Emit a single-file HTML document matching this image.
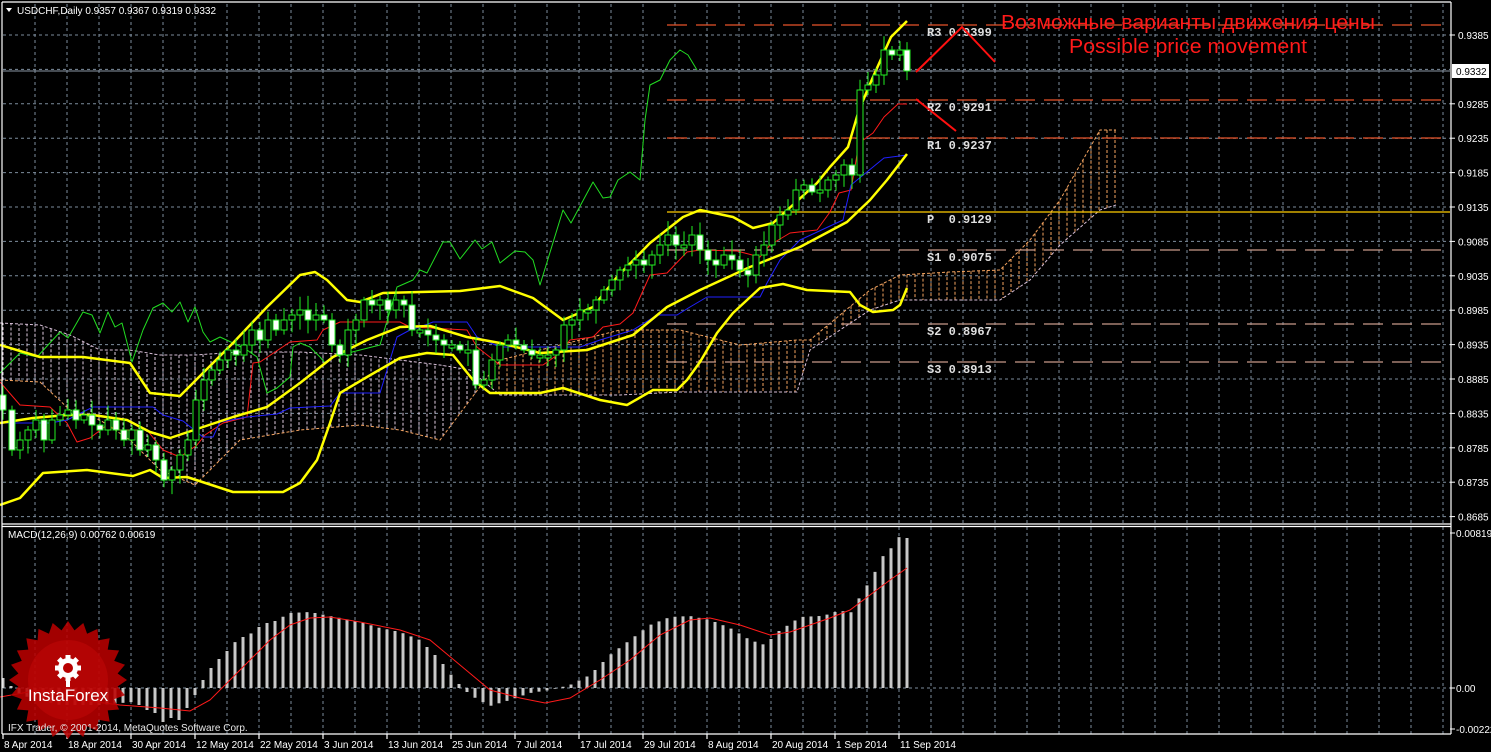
<!DOCTYPE html>
<html><head><meta charset="utf-8"><style>
html,body{margin:0;padding:0;background:#000;}
svg{display:block;}
text{font-family:"Liberation Sans","DejaVu Sans",sans-serif;}
</style></head><body>
<svg id="s" width="1491" height="752" viewBox="0 0 1491 752" xmlns="http://www.w3.org/2000/svg">
<rect width="1491" height="752" fill="#000"/>
<g id="grid"></g>
<g id="cloud"></g>
<g id="pivots"></g>
<g id="ind"></g>
<g id="candles"></g>
<g id="macd"></g>
<g id="frame"></g>
<g id="logo" transform="translate(68,680)">
  <polygon id="star" fill="#b80000" fill-opacity="0.88"/>
  <circle r="40" fill="#c40808" fill-opacity="0.5"/>
  <g fill="#fff" id="gear">
    <circle cx="0" cy="-12" r="10"/>
    <circle cx="0" cy="-12" r="5" fill="#b80000"/>
    <rect x="-2" y="-7" width="4" height="14"/>
  </g>
  <text x="0" y="21" text-anchor="middle" fill="#fff" font-size="17">InstaForex</text>
</g>
<text x="8" y="731" fill="#e8e8e8" font-size="10">IFX Trader, © 2001-2014, MetaQuotes Software Corp.</text>
<polygon points="6,8 12,8 9,12" fill="#fff"/>
<text x="17" y="14" fill="#fff" font-size="10">USDCHF,Daily  0.9357 0.9367 0.9319 0.9332</text>
<text x="8" y="538" fill="#fff" font-size="10">MACD(12,26,9) 0.00762 0.00619</text>
<text x="1188" y="29" text-anchor="middle" fill="#ff1a1a" font-size="20" textLength="374" lengthAdjust="spacingAndGlyphs">Возможные варианты движения цены</text>
<text x="1188" y="53" text-anchor="middle" fill="#ff1a1a" font-size="20" textLength="238" lengthAdjust="spacingAndGlyphs">Possible price movement</text>
<polyline points="916,72 962,27 995,62" fill="none" stroke="#ff1010" stroke-width="2"/>
<polyline points="916,99 956,131" fill="none" stroke="#ff1010" stroke-width="2"/>
</svg>
<script>
var NS="http://www.w3.org/2000/svg";
function el(p,t,a,txt){var e=document.createElementNS(NS,t);for(var k in a)e.setAttribute(k,a[k]);if(txt!==undefined)e.textContent=txt;document.getElementById(p).appendChild(e);return e;}
function interp(pts,x){if(x<=pts[0][0])return pts[0][1];for(var i=1;i<pts.length;i++){if(x<=pts[i][0]){var a=pts[i-1],b=pts[i];return a[1]+(b[1]-a[1])*(x-a[0])/(b[0]-a[0]);}}return pts[pts.length-1][1];}
var G="#7d8d9d";
for(var x=35;x<1450;x+=32){el("grid","line",{x1:x,y1:4,x2:x,y2:523,stroke:G,"stroke-dasharray":"3,3"});el("grid","line",{x1:x,y1:527,x2:x,y2:734,stroke:G,"stroke-dasharray":"3,3"});}
var labs=["0.9385","","0.9285","0.9235","0.9185","0.9135","0.9085","0.9035","0.8985","0.8935","0.8885","0.8835","0.8785","0.8735","0.8685"];
for(var i=0;i<15;i++){var y=35+i*34.4;el("grid","line",{x1:3,y1:y,x2:1450,y2:y,stroke:G,"stroke-dasharray":"3,3"});
 if(labs[i]){el("frame","line",{x1:1450,y1:y,x2:1455,y2:y,stroke:"#fff"});el("frame","text",{x:1458,y:y+4,fill:"#fff","font-size":"10"},labs[i]);}}
el("grid","line",{x1:3,y1:688,x2:1450,y2:688,stroke:G,"stroke-dasharray":"3,3"});
el("grid","line",{x1:3,y1:71,x2:1450,y2:71,stroke:"#8a96a4"});
var C=[[0,380,323],[40,382,325],[70,410,335],[100,420,350],[130,440,350],[160,470,355],[195,485,355],[240,440,352],[300,430,352],[360,425,355],[400,430,360],[440,440,365],[470,400,370],[500,360,395],[560,345,395],[620,330,395],[680,330,392],[740,345,392],[797,340,392],[810,340,350],[840,315,330],[870,290,310],[900,275,300],[950,272,300],[1000,270,300],[1030,240,280],[1060,200,245],[1100,130,210],[1116,130,205]];
var A=C.map(function(c){return [c[0],c[1]]}),B=C.map(function(c){return [c[0],c[2]]});
for(var x=3;x<=1116;x+=8){var a=interp(A,x),b=interp(B,x);el("cloud","line",{x1:x,y1:a,x2:x,y2:b,stroke:a<b?"#f4a460":"#e0cce0","stroke-dasharray":"3,2"});}
el("cloud","polyline",{points:A.map(function(p){return p.join(",")}).join(" "),fill:"none",stroke:"#f4a460","stroke-dasharray":"3,2"});
el("cloud","polyline",{points:B.map(function(p){return p.join(",")}).join(" "),fill:"none",stroke:"#d8bfd8","stroke-dasharray":"3,2"});
var LS="font-family:'Liberation Mono','DejaVu Sans Mono',monospace;font-weight:bold;font-size:12px;white-space:pre";
function piv(y,c,l){el("pivots","line",{x1:667,y1:y,x2:1450,y2:y,stroke:c,"stroke-width":1.3,"stroke-dasharray":"20,9"});if(l)el("pivots","text",{x:927,y:y+11,fill:"#e0e0e0",style:LS},l);}
piv(25,"#e8542a","R3 0.9399");piv(100,"#e8542a","R2 0.9291");piv(138,"#e8542a","R1 0.9237");
el("pivots","line",{x1:667,y1:212,x2:1450,y2:212,stroke:"#ffcc00","stroke-width":1.2});
el("pivots","text",{x:927,y:223,fill:"#e0e0e0",style:LS},"P  0.9129");
piv(250,"#c89a8a","S1 0.9075");piv(324,"#c89a8a","S2 0.8967");piv(362,"#c89a8a","S3 0.8913");
function pl(pts,c,w){el("ind","polyline",{points:pts.map(function(p){return p.join(",")}).join(" "),fill:"none",stroke:c,"stroke-width":w,"stroke-linejoin":"round"});}
pl([[0,373],[20,353],[37,357],[60,332],[68,338],[83,312],[92,315],[100,333],[108,312],[115,327],[122,323],[132,362],[143,330],[153,308],[163,303],[172,312],[180,302],[188,322],[195,307],[203,332],[210,342],[220,337],[233,343],[247,350],[257,357],[267,393],[277,388],[290,377],[293,347],[300,343],[310,347],[320,357],[325,363],[333,357],[360,350],[380,345],[397,287],[413,280],[420,270],[427,273],[443,242],[450,242],[460,259],[475,240],[482,249],[492,242],[500,263],[515,251],[525,252],[533,260],[540,285],[563,210],[571,223],[593,182],[603,198],[610,197],[618,180],[630,172],[640,180],[645,120],[650,85],[660,80],[670,60],[680,50],[688,55],[697,70]],"#22dd22",1);
pl([[0,382],[20,405],[50,407],[67,423],[77,442],[90,438],[107,425],[117,430],[147,430],[163,450],[180,457],[197,445],[205,435],[223,423],[247,417],[253,363],[260,362],[290,342],[317,340],[323,330],[340,322],[400,322],[410,327],[467,330],[477,347],[500,365],[543,365],[560,353],[570,340],[593,337],[603,327],[620,324],[633,313],[650,275],[667,273],[687,252],[700,250],[737,251],[760,257],[770,245],[790,233],[817,230],[830,212],[839,193],[851,190],[859,143],[873,133],[884,117],[898,104],[907,104]],"#ff1a1a",1);
pl([[0,423],[50,423],[67,420],[93,407],[153,407],[163,415],[183,421],[203,437],[213,437],[220,422],[247,417],[277,414],[290,408],[330,406],[340,393],[380,393],[397,337],[410,330],[420,327],[433,322],[467,322],[477,337],[500,347],[580,347],[600,340],[633,330],[657,315],[677,315],[690,307],[707,297],[760,297],[767,283],[780,260],[800,240],[843,220],[851,185],[884,158],[907,155]],"#2020ff",1);
pl([[0,345],[40,357],[83,357],[130,363],[150,393],[180,396],[193,383],[233,343],[267,307],[300,275],[315,272],[327,280],[347,300],[360,302],[383,293],[420,292],[460,291],[500,286],[533,298],[563,320],[593,307],[617,277],[650,243],[683,217],[700,210],[733,217],[753,228],[773,223],[817,183],[830,167],[848,147],[859,110],[873,77],[891,37],[907,21]],"#ffff00",2.5);
pl([[0,423],[33,418],[67,415],[93,415],[127,420],[150,432],[170,438],[200,428],[233,417],[267,407],[300,383],[333,357],[367,340],[400,327],[430,326],[467,337],[500,343],[540,353],[587,350],[633,335],[667,307],[700,290],[750,267],[800,247],[847,222],[870,200],[887,180],[907,154]],"#ffff00",2.5);
pl([[0,505],[20,498],[43,473],[87,470],[133,476],[150,470],[163,478],[187,477],[233,492],[283,492],[300,483],[317,460],[330,423],[340,393],[367,377],[400,358],[427,353],[453,355],[473,380],[490,393],[540,393],[563,388],[600,400],[627,405],[653,390],[677,390],[687,380],[700,362],[717,333],[733,313],[760,288],[783,284],[807,290],[850,292],[860,305],[873,312],[893,310],[900,305],[907,288]],"#ffff00",2.5);
var P=[[3,410],[12,450],[20,440],[28,430],[36,420],[44,440],[52,420],[60,415],[68,410],[76,420],[84,415],[92,425],[100,430],[108,420],[116,430],[124,440],[132,430],[140,450],[148,445],[156,460],[164,480],[172,470],[180,455],[188,440],[196,400],[204,380],[212,370],[220,360],[228,350],[236,355],[244,345],[252,330],[260,340],[268,320],[276,330],[284,320],[292,315],[300,310],[308,320],[316,315],[324,320],[332,345],[340,355],[348,330],[356,320],[364,300],[372,305],[380,300],[388,310],[396,300],[404,305],[412,330],[420,330],[428,335],[436,340],[444,345],[452,345],[460,350],[468,350],[476,385],[484,380],[492,360],[500,345],[508,340],[516,345],[524,350],[532,355],[540,355],[548,355],[556,350],[564,325],[572,320],[580,310],[588,310],[596,300],[604,290],[612,280],[620,270],[628,265],[636,260],[644,265],[652,255],[660,245],[668,235],[676,245],[684,245],[692,235],[700,250],[708,260],[716,265],[724,255],[732,260],[740,270],[748,275],[756,255],[764,245],[772,225],[780,215],[788,210],[796,190],[804,185],[812,192],[820,190],[828,180],[836,175],[844,165],[852,175],[860,90],[868,85],[876,75],[884,50],[892,55],[900,50],[907,71]];
var seed=7;function rnd(){seed=(seed*9301+49297)%233280;return seed/233280;}
var prev=400;
for(var i=0;i<P.length;i++){var x=P[i][0],c=P[i][1],o=(i==0?395:prev);if(Math.abs(o-c)<3)o=c+3;var hi=Math.min(o,c)-3-rnd()*12,lo=Math.max(o,c)+3+rnd()*12;
 el("candles","line",{x1:x,y1:hi,x2:x,y2:lo,stroke:"#22ee22"});
 el("candles","rect",{x:x-3,y:Math.min(o,c),width:6,height:Math.abs(o-c),fill:c<o?"#000":"#fff",stroke:"#22ee22"});prev=c;}
var H=[[3,678],[20,695],[40,700],[60,705],[100,705],[132,702],[139,705],[147,710],[155,713],[163,722],[171,718],[179,720],[187,708],[195,695],[203,680],[211,668],[219,659],[228,650],[236,641],[243,637],[252,633],[259,627],[267,623],[275,621],[290,613],[310,612],[320,614],[340,618],[360,622],[380,628],[400,632],[420,640],[440,660],[455,680],[470,695],[490,706],[510,700],[530,693],[550,690],[570,685],[590,675],[610,655],[630,640],[650,625],[670,617],[690,616],[710,620],[730,628],[750,640],[765,645],[780,630],[790,624],[800,617],[820,616],[830,614],[840,610],[850,614],[858,600],[866,587],[874,574],[882,557],[890,550],[894,543],[900,536],[907,538]];
for(var x=3;x<=907;x+=8){var y=interp(H,x);el("macd","rect",{x:x-1.5,y:Math.min(y,688),width:3,height:Math.abs(688-y),fill:"#c8c8c8"});}
var S=[[0,697],[40,690],[80,700],[120,705],[160,708],[190,711],[210,700],[230,680],[250,660],[270,640],[290,625],[310,618],[330,617],[360,622],[400,630],[430,640],[460,665],[490,690],[520,698],[545,703],[570,698],[600,680],[630,660],[660,635],[690,620],[710,618],[740,625],[770,635],[790,632],[810,625],[830,618],[850,610],[870,595],[890,580],[907,568]];
el("macd","polyline",{points:S.map(function(p){return p.join(",")}).join(" "),fill:"none",stroke:"#ff1a1a","stroke-width":1});
function fl(a,b,c,d){el("frame","line",{x1:a,y1:b,x2:c,y2:d,stroke:"#fff","stroke-width":1.2});}
fl(2,2,1451,2);fl(2,2,2,734);fl(1451,2,1451,734);fl(2,524,1451,524);fl(2,526.5,1451,526.5);fl(2,734,1451,734);
el("frame","rect",{x:1452,y:64,width:37,height:14,fill:"#fff"});
el("frame","text",{x:1456,y:75,fill:"#000","font-size":"10"},"0.9332");
[["0.00819",533],["0.00",688],["-0.00222",729]].forEach(function(l){el("frame","line",{x1:1450,y1:l[1],x2:1455,y2:l[1],stroke:"#fff"});el("frame","text",{x:1456,y:l[1]+4,fill:"#fff","font-size":"10"},l[0]);});
var D=["8 Apr 2014","18 Apr 2014","30 Apr 2014","12 May 2014","22 May 2014","3 Jun 2014","13 Jun 2014","25 Jun 2014","7 Jul 2014","17 Jul 2014","29 Jul 2014","8 Aug 2014","20 Aug 2014","1 Sep 2014","11 Sep 2014"];
for(var i=0;i<D.length;i++){var x=3+64*i;fl(x,734,x,739);el("frame","text",{x:x+1,y:748,fill:"#fff","font-size":"10"},D[i]);}
var pts=[];for(var i=0;i<48;i++){var r=i%2?50:59,a=i*Math.PI/24;pts.push((r*Math.sin(a)).toFixed(1)+","+(-r*Math.cos(a)).toFixed(1));}
document.getElementById("star").setAttribute("points",pts.join(" "));
for(var i=0;i<8;i++){var a=i*45;el("gear","rect",{x:-2.5,y:-25,width:5,height:6,transform:"rotate("+a+" 0 -12)"});}
</script>
</body></html>
